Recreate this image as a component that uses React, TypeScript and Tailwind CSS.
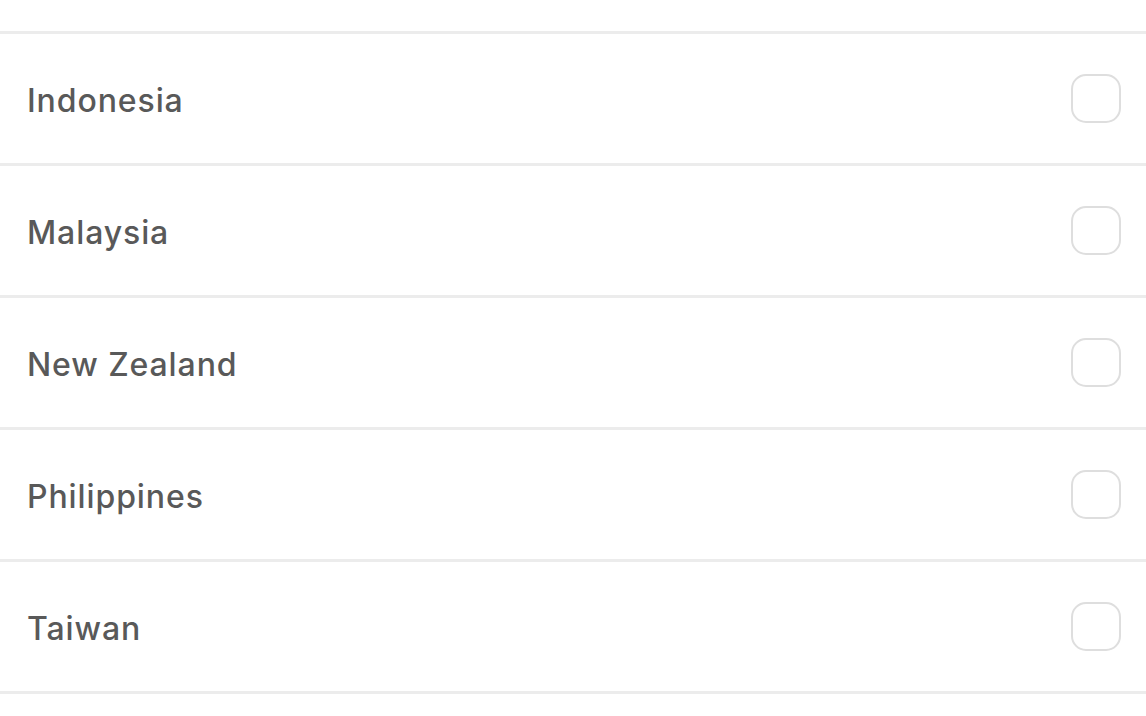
import React from "react";

const items = ["Indonesia", "Malaysia", "New Zealand", "Philippines", "Taiwan"];

export default function App() {
  return (
    <div className="w-[1146px] h-[716px] bg-white overflow-hidden" style={{ fontFamily: "Inter, 'Noto Sans', sans-serif" }}>
      <div className="h-[31px]" />
      {items.map((name) => (
        <div key={name} className="h-[132px] border-t-[3px] border-[#ececec] flex items-center justify-between pl-[27px] pr-[25px]">
          <span className="text-[32px] font-medium text-[#595959] tracking-[0.9px] leading-none pt-[5px]">{name}</span>
          <div className="w-[50px] h-[49px] rounded-[15px] border-2 border-[#dedede]" />
        </div>
      ))}
      <div className="border-t-[3px] border-[#ececec]" />
    </div>
  );
}
